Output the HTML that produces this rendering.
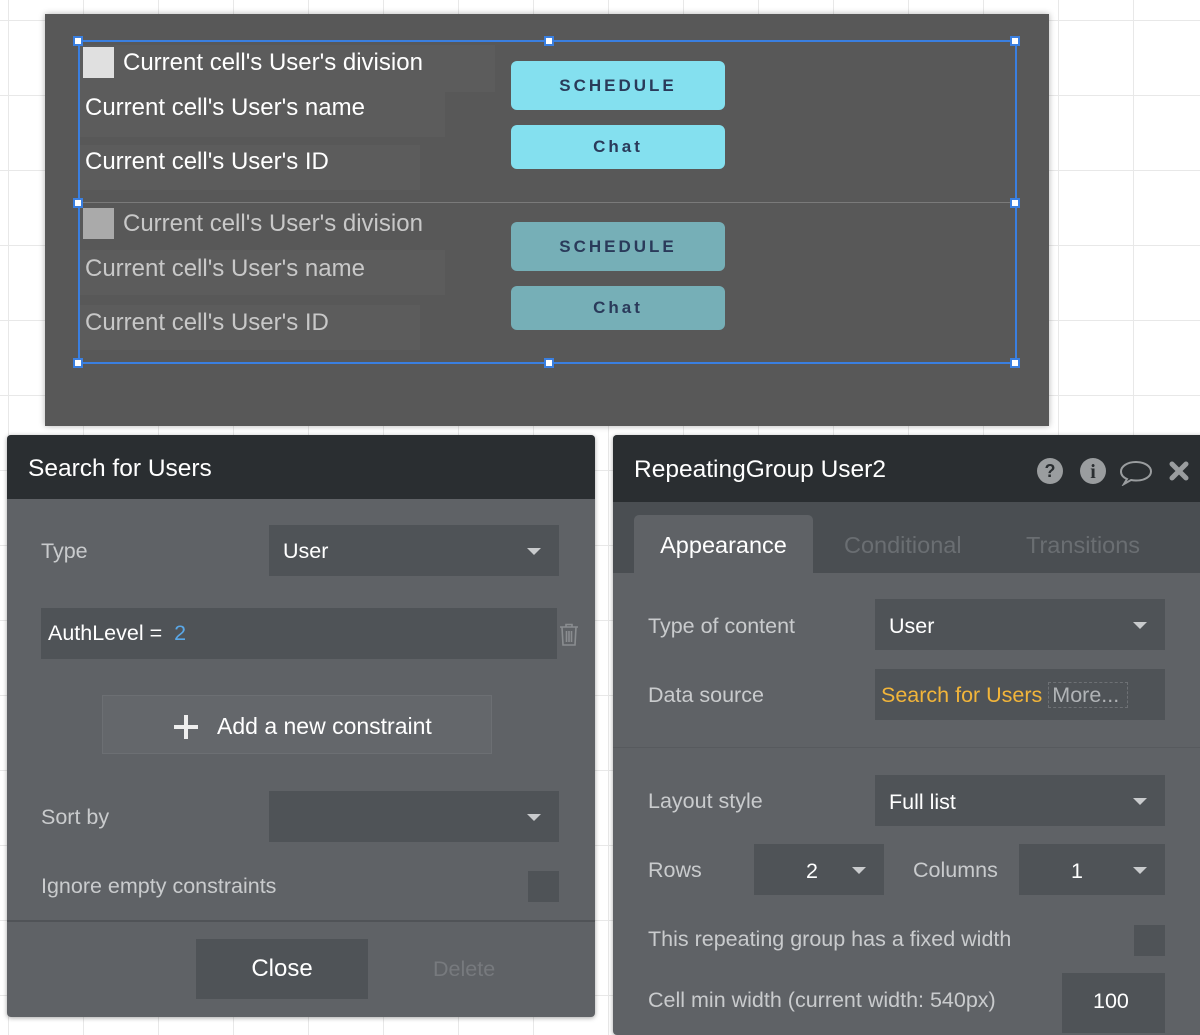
<!DOCTYPE html>
<html><head><meta charset="utf-8">
<style>
*{box-sizing:border-box;margin:0;padding:0}
body{width:1200px;height:1024px;overflow:hidden;position:relative;font-family:"Liberation Sans",sans-serif;
background-color:#fff;
background-image:linear-gradient(90deg,#e8e8e8 1px,transparent 1px),linear-gradient(#e8e8e8 1px,transparent 1px);
background-size:75px 75px;background-position:8px 20px}
.abs{position:absolute}
#canvas{left:45px;top:14px;width:1004px;height:412px;background:#585858;box-shadow:0 0 6px rgba(0,0,0,.3)}
.t{position:absolute;font-size:24px;color:#fff;white-space:nowrap}
.dim{color:#c8c8c8}
.bg{position:absolute;background:#5c5c5c}
.btn{position:absolute;left:511px;width:214px;border-radius:6px;color:#2a3a5a;font-size:17px;letter-spacing:3px;text-align:center;font-weight:bold}
.sel{border:2px solid #3a7fe0}
.h{position:absolute;width:10px;height:10px;background:#fff;border:2px solid #3a7fe0}
.panel{background:#5f6266;box-shadow:0 1px 5px rgba(0,0,0,.35);border-radius:4px;overflow:hidden}
.hdr{position:absolute;left:0;top:0;right:0;background:#2a2e31;color:#fff;font-size:24.5px;padding-left:21px}
.lbl{position:absolute;color:#c9cbcd;font-size:21.5px;white-space:nowrap}
.dd{position:absolute;background:#4f5357;color:#fff;font-size:21.5px;padding-left:14px;white-space:nowrap}
.arr{position:absolute;right:18px;top:50%;margin-top:-3px;width:0;height:0;border-left:7px solid transparent;border-right:7px solid transparent;border-top:7px solid #c9cbcd}
.cb{position:absolute;background:#4f5357}
</style></head><body>
<div id="canvas" class="abs"></div>
<div class="bg" style="left:80px;top:45px;width:415px;height:47px"></div>
<div class="bg" style="left:80px;top:92px;width:365px;height:45px"></div>
<div class="bg" style="left:80px;top:145px;width:340px;height:45px"></div>
<div class="bg" style="left:80px;top:250px;width:365px;height:45px"></div>
<div class="bg" style="left:80px;top:305px;width:340px;height:45px"></div>
<div class="abs" style="left:83px;top:47px;width:31px;height:31px;background:#e0e0e0"></div>
<div class="abs" style="left:83px;top:208px;width:31px;height:31px;background:#aaa"></div>
<div class="t" style="left:123px;top:49px">Current cell's User's division</div>
<div class="t" style="left:85px;top:94px">Current cell's User's name</div>
<div class="t" style="left:85px;top:148px">Current cell's User's ID</div>
<div class="t dim" style="left:123px;top:210px">Current cell's User's division</div>
<div class="t dim" style="left:85px;top:255px">Current cell's User's name</div>
<div class="t dim" style="left:85px;top:309px">Current cell's User's ID</div>
<div class="btn" style="top:61px;height:49px;line-height:49px;background:#84e0ef">SCHEDULE</div>
<div class="btn" style="top:125px;height:44px;line-height:44px;background:#84e0ef">Chat</div>
<div class="btn" style="top:222px;height:49px;line-height:49px;background:#76afb7">SCHEDULE</div>
<div class="btn" style="top:286px;height:44px;line-height:44px;background:#76afb7">Chat</div>
<div class="abs sel" style="left:78px;top:40px;width:939px;height:324px"></div>
<div class="abs" style="left:80px;top:202px;width:935px;height:1px;background:#7a7a7a"></div>
<div class="h" style="left:73px;top:36px"></div><div class="h" style="left:544px;top:36px"></div><div class="h" style="left:1010px;top:36px"></div>
<div class="h" style="left:73px;top:198px"></div><div class="h" style="left:1010px;top:198px"></div>
<div class="h" style="left:73px;top:358px"></div><div class="h" style="left:544px;top:358px"></div><div class="h" style="left:1010px;top:358px"></div>

<div class="abs panel" style="left:7px;top:435px;width:588px;height:582px">
 <div class="hdr" style="height:64px;line-height:68px">Search for Users</div>
 <div class="lbl" style="left:34px;top:104px">Type</div>
 <div class="dd" style="left:262px;top:90px;width:290px;height:51px;line-height:53px">User<div class="arr"></div></div>
 <div class="dd" style="left:34px;top:173px;width:516px;height:51px;line-height:50px;padding-left:7px">AuthLevel =&nbsp; <span style="color:#5aa8e8">2</span></div>
 <svg class="abs" style="left:551px;top:188px" width="22" height="24" viewBox="0 0 22 24"><g fill="none" stroke="#8a8d90" stroke-width="1.6"><path d="M2 4h18M8 4V1.5h6V4M4 4l1 18h12l1-18M8.5 8v11M11 8v11M13.5 8v11"/></g></svg>
 <div class="abs" style="left:95px;top:260px;width:390px;height:59px;border:1px solid #6c6f73;background:#64676b;color:#fff;font-size:23px;line-height:60px;padding-left:114px;white-space:nowrap">Add a new constraint</div>
 <div class="abs" style="left:167px;top:290px;width:24px;height:4px;background:#eee"></div>
 <div class="abs" style="left:177px;top:280px;width:4px;height:24px;background:#eee"></div>
 <div class="lbl" style="left:34px;top:370px">Sort by</div>
 <div class="dd" style="left:262px;top:356px;width:290px;height:51px"><div class="arr"></div></div>
 <div class="lbl" style="left:34px;top:439px">Ignore empty constraints</div>
 <div class="cb" style="left:521px;top:436px;width:31px;height:31px"></div>
 <div class="abs" style="left:0;top:485px;width:588px;height:2px;background:#505357"></div>
 <div class="abs" style="left:189px;top:504px;width:172px;height:60px;background:#4f5357;color:#fff;font-size:24px;text-align:center;line-height:60px">Close</div>
 <div class="lbl" style="left:426px;top:522px;color:#777a7e">Delete</div>
</div>

<div class="abs panel" style="left:613px;top:435px;width:600px;height:600px">
 <div class="hdr" style="height:67px;line-height:70px">RepeatingGroup User2</div>
 <svg class="abs" style="left:423px;top:21px" width="160" height="30" viewBox="0 0 160 30">
  <circle cx="14" cy="15" r="13" fill="#9a9d9f"/><text x="14" y="21" text-anchor="middle" font-family="Liberation Sans" font-weight="bold" font-size="18" fill="#2a2e31">?</text>
  <circle cx="57" cy="15" r="13" fill="#9a9d9f"/><text x="57" y="22" text-anchor="middle" font-family="Liberation Serif" font-weight="bold" font-size="20" fill="#2a2e31">i</text>
  <path d="M100 6c-9 0-15 4.5-15 9.5 0 3.3 2.5 6 6 7.5l-3 5 7-4c1.6.3 3.3.5 5 .5 9 0 15-4 15-9s-6-9.5-15-9.5z" fill="none" stroke="#9a9d9f" stroke-width="2"/>
  <path d="M136 8l14 14M150 8l-14 14" stroke="#9a9d9f" stroke-width="5" stroke-linecap="round"/>
 </svg>
 <div class="abs" style="left:0;top:67px;width:600px;height:71px;background:#4a4e52"></div>
 <div class="abs" style="left:21px;top:80px;width:179px;height:60px;background:#5f6266;border-radius:5px 5px 0 0;color:#fff;font-size:23.5px;text-align:center;line-height:60px">Appearance</div>
 <div class="abs" style="left:231px;top:97px;color:#6a6e72;font-size:23.5px">Conditional</div>
 <div class="abs" style="left:413px;top:97px;color:#6a6e72;font-size:23.5px">Transitions</div>
 <div class="lbl" style="left:35px;top:179px">Type of content</div>
 <div class="dd" style="left:262px;top:164px;width:290px;height:51px;line-height:55px">User<div class="arr"></div></div>
 <div class="lbl" style="left:35px;top:248px">Data source</div>
 <div class="dd" style="left:262px;top:234px;width:290px;height:51px;line-height:52px;padding-left:6px"><span style="color:#f2b53a">Search for Users</span> <span style="color:#b0b3b6;border:1px dashed #6d7074;padding:0 8px 0 3px">More...</span></div>
 <div class="abs" style="left:0;top:312px;width:600px;height:1px;background:#575a5e"></div>
 <div class="lbl" style="left:35px;top:354px">Layout style</div>
 <div class="dd" style="left:262px;top:340px;width:290px;height:51px;line-height:54px">Full list<div class="arr"></div></div>
 <div class="lbl" style="left:35px;top:423px">Rows</div>
 <div class="dd" style="left:141px;top:409px;width:130px;height:51px;line-height:54px;padding-left:52px">2<div class="arr"></div></div>
 <div class="lbl" style="left:300px;top:423px">Columns</div>
 <div class="dd" style="left:406px;top:409px;width:146px;height:51px;line-height:54px;padding-left:52px">1<div class="arr"></div></div>
 <div class="lbl" style="left:35px;top:492px">This repeating group has a fixed width</div>
 <div class="cb" style="left:521px;top:490px;width:31px;height:31px"></div>
 <div class="lbl" style="left:35px;top:553px">Cell min width (current width: 540px)</div>
 <div class="dd" style="left:449px;top:538px;width:103px;height:60px;line-height:56px;padding-left:31px">100</div>
</div>
</body></html>
